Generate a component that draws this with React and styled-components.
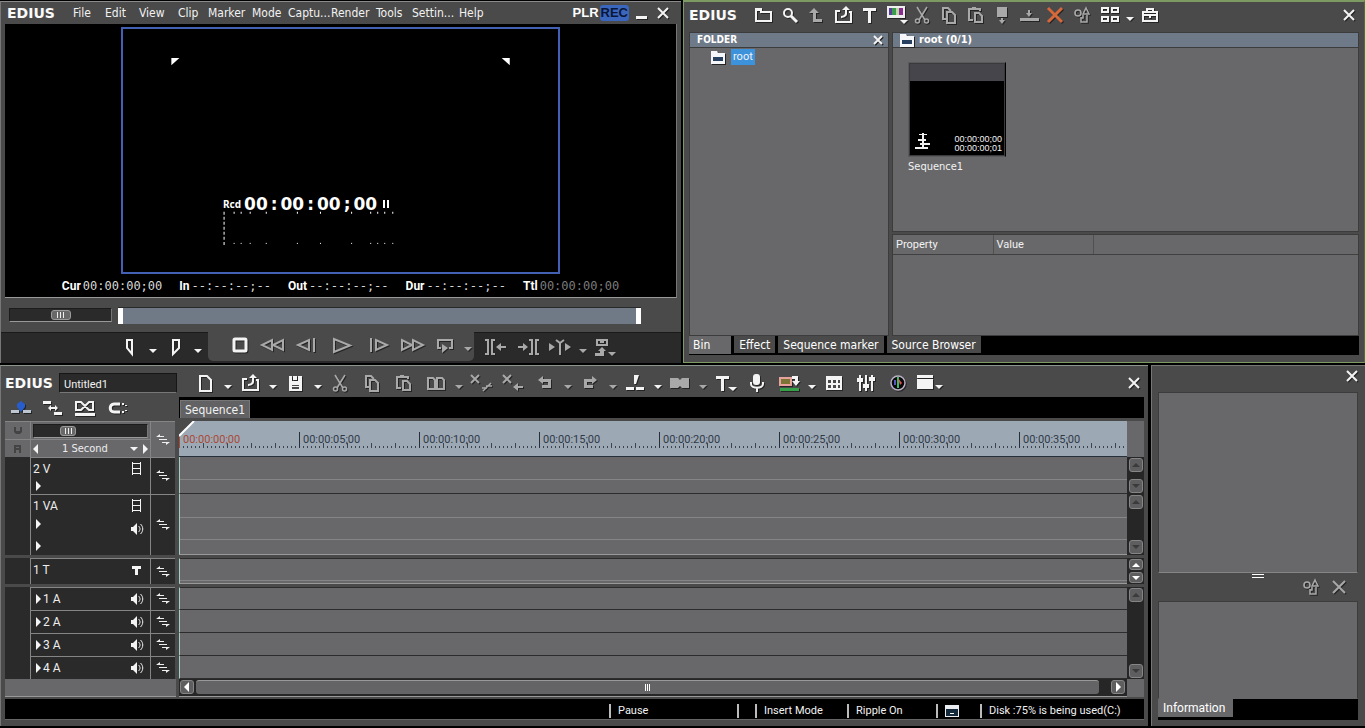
import React from "react";
import styled, { createGlobalStyle, css } from "styled-components";

const GlobalStyle = createGlobalStyle`
  * {
    box-sizing: border-box;
  }

  body {
    margin: 0;
    background-color: black;
    color: #f2f2f2;
    font-family: Roboto, "Liberation Sans", sans-serif;
    font-size: 12px;
    line-height: 16px;
  }

  button, input, select {
    margin: 0;
    padding: 0;
    border: 0;
    background: none;
    color: inherit;
    font: inherit;
  }
`;

const tahoma = `"DejaVu Sans Condensed", "DejaVu Sans", sans-serif`;

/* ---------- icons ---------- */

const outline = { fill: "none", stroke: "currentColor", strokeWidth: 2 };
const thin = { fill: "none", stroke: "currentColor", strokeWidth: 1 };

const icons = {
  folder: (
    <>
      <path {...outline} d="M5 18V7h5v2h10v9z" />
      <path d="M4 5h7v3H4z" />
    </>
  ),
  search: (
    <>
      <circle {...outline} cx="10" cy="10" r="4" />
      <path {...outline} strokeWidth="3" d="M13 13l6 6" />
    </>
  ),
  up: <path d="M10 5l5 5h-3v6h6v3H9v-9H5z" />,
  capture: (
    <>
      <path {...outline} d="M9 8H5v11h15V9h-2" />
      <path d="M15 3l4 4h-3v4c0 3-5 4-6 4v-2c2 0 4-1 4-3V7h-3z" />
    </>
  ),
  text: <path d="M6 5h13v3h-5v12h-3V8H6z" />,
  colors: (
    <>
      <path d="M3 3h18v12H3z" fill="#eee" />
      <path d="M5 5h3v7H5z" fill="#5a3f9a" />
      <path d="M8 5h4v7H8z" fill="#3c9a4c" />
      <path d="M12 5h3v7h-3z" fill="#b7d8a0" />
      <path d="M15 5h4v7h-4z" fill="#8b2b94" />
      <path d="M16 17h8l-4 4z" />
    </>
  ),
  cut: (
    <>
      <path {...outline} strokeWidth="1.6" d="M7 4l8 13M17 4L9 17" />
      <circle {...outline} strokeWidth="1.5" cx="7.500" cy="18" r="2" />
      <circle {...outline} strokeWidth="1.5" cx="16.500" cy="18" r="2" />
    </>
  ),
  copy: (
    <>
      <path {...outline} strokeWidth="2" d="M9 16H6V5h5l3 3" />
      <path {...outline} strokeWidth="2" d="M10 9h5l3 3v8h-8z" />
    </>
  ),
  paste: (
    <>
      <path {...outline} strokeWidth="2" d="M9 17H5V6h2M13 6h3v2M7 6h6" />
      <path d="M8 4h4v3H8z" />
      <path {...outline} strokeWidth="2" d="M11 10h4l3 3v6h-7z" />
    </>
  ),
  dropDown: <path d="M7 4h10v10H7zM11 15h2v2h2l-3 4-3-4h2z" />,
  insertBar: <path d="M3 15h19v3H3zM11 7h2v3h2l-3 4-3-4h2z" />,
  del: <path {...outline} stroke="#d6693c" strokeWidth="3" d="M5 5l14 14M19 5L5 19" />,
  shapes: (
    <>
      <circle {...outline} strokeWidth="1.600" cx="8" cy="10" r="3" />
      <path {...outline} strokeWidth="1.500" d="M16 5l-3 6h6zM11 15h2v-3M11 14v5h6v-7" />
    </>
  ),
  tiles: (
    <g {...outline} strokeWidth="2">
      <path d="M4 5h6v4H4zM14 5h6v4h-6zM4 14h6v4H4zM14 14h6v4h-6z" />
    </g>
  ),
  toolbox: (
    <>
      <path {...outline} strokeWidth="2" d="M5 9h14v9H5zM5 12h14M9 8V6h6v2" />
      <path d="M11 11h2v4h-2z" />
    </>
  ),
  close: <path {...outline} d="M7 7l10 10M17 7L7 17" />,
  smallClose: <path {...outline} d="M8 8l8 8M16 8l-8 8" />,
  bigClose: <path {...outline} d="M6 6l12 12M18 6L6 18" />,
  minimize: <path d="M7 15h11v3H7z" />,
  smallFolder: (
    <>
      <path d="M5 6h6l1 2h7v11H5z" fill="#f4f6fa" />
      <path d="M7 12h10v4H7z" fill="#27405f" />
    </>
  ),
  caret: <path d="M8 14h8l-4 4z" />,
  newFile: <path {...outline} d="M7 5h7l4 4v11H7z" />,
  save: (
    <>
      <path d="M6 5h3v5h6V5h4v15H6z" />
      <path d="M10 5h4v4h-4z" />
      <path d="M9 14h7v4H9z" fill="#4a4a4a" />
      <path d="M9 15h7v1H9z" />
    </>
  ),
  duplicate: (
    <path {...outline} strokeWidth="2" d="M4 7h5l2 2v9H4zM13 7h5l2 2v9h-7z" />
  ),
  xSlash: (
    <>
      <path {...outline} d="M2 4l8 8M10 4l-8 8" />
      <path {...outline} strokeWidth="1.500" d="M14 20l8-8M13 17h5M17 15h6" />
    </>
  ),
  xArrow: (
    <>
      <path {...outline} d="M2 4l8 8M10 4l-8 8" />
      <path d="M12 16l5-4v3h5v2h-5v3z" />
    </>
  ),
  undo: <path d="M5 9l5-4v3h8v9H9v-3h6v-3h-5v2z" />,
  redo: <path d="M19 9l-5-4v3H6v9h9v-3H9v-3h5v2z" />,
  split: <path d="M11 4h5l-3 9h-2zM3 16h8v3H3zM13 16h8v3h-8z" />,
  transition: <path d="M2 7h8l2 2 2-2h7v10h-7l-2-2-2 2H2z" />,
  title: <path d="M3 5h13v3h-5v12H8V8H3zM15 16h9l-4 4z" />,
  mic: (
    <>
      <rect x="8" y="3" width="7" height="11" rx="3" />
      <path {...outline} d="M6 11v2c0 5 12 5 12 0v-2M12 17v4" />
    </>
  ),
  export: (
    <>
      <path d="M3 7h11v7H3z" fill="#7b7435" stroke="#e7a39b" strokeWidth="2" />
      <path d="M3 17h19v3H3z" fill="#36a048" />
      <path d="M15 5h6v5h2l-4 5-4-5h3V8h-3z" />
    </>
  ),
  panelGrid: (
    <>
      <path d="M4 5h16v14H4z" />
      <g fill="#4a4a4a">
        <path d="M6 9h3v3H6zM11 9h3v3h-3zM16 9h2v3h-2zM6 14h3v3H6zM11 14h3v3h-3zM16 14h2v3h-2z" />
      </g>
    </>
  ),
  mixer: (
    <>
      <path d="M5 4h2v16H5zM11 4h2v16h-2zM17 4h2v16h-2z" />
      <path d="M3 7h6v4H3zM9 13h6v4H9zM15 6h6v4h-6z" />
    </>
  ),
  scope: (
    <>
      <circle cx="12" cy="12" r="7" fill="#08080c" stroke="#b9b0c4" strokeWidth="1.500" />
      <path d="M11 6h2v11h-2z" fill="#36c060" />
      <path d="M12 7l4 5-2 2z" fill="#e04d52" />
      <path d="M8 9h2v5H8z" fill="#5b55c0" />
    </>
  ),
  windows: <path d="M-1 4h16v3H-1zM-1 8h16v10H-1zM17 14h8l-4 4z" />,
  ripple: (
    <>
      <path d="M2 14h8v3H2zM14 14h8v3h-8z" fill="#bdc7d2" />
      <path d="M8 8l4-3 4 3v3l-4 5-4-5z" fill="#285ecb" />
    </>
  ),
  sync: (
    <>
      <path d="M2 5h8v3H2zM13 16h8v3h-8z" />
      <path d="M7 12l3-3v2h4V9l3 3-3 3v-2h-4v2z" />
    </>
  ),
  crossfade: (
    <>
      <path {...outline} strokeWidth="2" d="M3 6h5l8 8h4V6h-4l-8 8H3z" />
      <path d="M2 17h20v3H2z" />
    </>
  ),
  magnet: (
    <>
      <path {...outline} strokeWidth="3" d="M15 8H9c-5 0-5 8 0 8h6" />
      <path d="M17 7h2v2h-2zM17 15h2v2h-2zM20 9h2v1h-2zM20 14h2v1h-2z" />
    </>
  ),
  markIn: <path {...outline} d="M9 5h5v14l-5-6z" />,
  markOut: <path {...outline} d="M10 5h6v8l-6 6z" />,
  stop: <rect {...outline} strokeWidth="3" x="6" y="6" width="12" height="12" rx="1" />,
  rewind: <path {...outline} d="M11 7v10L1 12zM22 7v10l-10-5z" />,
  prevFrame: <path {...outline} d="M15 7v10L4 12zM20 5v14" />,
  play: <path {...outline} d="M4 6v13l16-6.500z" />,
  nextFrame: <path {...outline} d="M9 7v10l11-5zM4 5v14" />,
  forward: <path {...outline} d="M2 7v10l10-5zM13 7v10l10-5z" />,
  loop: (
    <>
      <path {...outline} d="M8 15H5V7h14v8h-3" />
      <path d="M9 11l6 4-6 5z" />
    </>
  ),
  toIn: (
    <>
      <path {...outline} d="M1 5h3v14H1M11 5H8v14h3" />
      <path d="M12 12l5-4v3h5v2h-5v3z" />
    </>
  ),
  toOut: (
    <>
      <path {...outline} d="M13 5h3v14h-3M23 5h-3v14h3" />
      <path d="M12 12L7 8v3H2v2h5v3z" />
    </>
  ),
  around: (
    <>
      <path d="M1 8l6 4-6 4zM17 8l6 4-6 4z" />
      <path {...outline} d="M8 5l4 3 4-3M12 8v12" />
    </>
  ),
  insertMenu: (
    <>
      <path {...outline} d="M4 5h10v5H4z" />
      <path d="M7 6h4v2H7z" />
      <path d="M2 18h5v-2H5l4-4 4 4h-2v5H2zM15 17h8l-4 4z" />
    </>
  ),
  film: <path {...thin} d="M8.500 5v13M16.500 5v13M8 6.500h9M8 11.500h9M8 16.500h9" />,
  speaker: (
    <>
      <path d="M7 10h2l4-4v12l-4-4H7z" />
      <path {...thin} d="M14.500 9c2 2 2 4 0 6M16.500 7c3 3 3 7 0 10" />
    </>
  ),
  trackText: <path d="M8 8h9v3h-3v6h-3v-6H8z" />,
  patch: (
    <>
      <path {...thin} d="M6 8.500h7M8 11.500h8M11 14.500h7" />
      <path d="M5 9l4-3v3zM19 14l-4 3v-3z" />
    </>
  ),
  video: <path d="M8 8h2v4h4V8h2v5l-2 2h-4l-2-2z" />,
  record: <path d="M8 8h7v8h-2v-3h-3v3H8zM10 10h3v1h-3z" fillRule="evenodd" />,
  left: <path d="M14 7v10l-5-5z" />,
  right: <path d="M10 7v10l5-5z" />,
  upSmall: <path d="M8 14h8l-4-4z" />,
  downSmall: <path d="M8 10h8l-4 4z" />,
  sequence: <path d="M11 4h2v15h-2zM8 5h8v1H8zM7 10h8v2H7zM9 14h10v2H9zM4 18h13v2H4z" />,
  app: (
    <>
      <path d="M5 6h14v12H5z" fill="#e9edf2" />
      <path d="M6 10h12v7H6z" fill="#14283c" />
      <path d="M10 14h4v1h-4z" fill="#fff" />
    </>
  ),
};

const Svg = styled.svg`
  display: block;
  flex: none;
  overflow: visible;
  fill: currentColor;
  filter: ${(p) => (p.$flat ? "none" : "drop-shadow(1px 1px 0 #242424)")};
`;

const Icon = ({ name, flat }) => (
  <Svg width="24" height="24" viewBox="0 0 24 24" $flat={flat} aria-hidden="true">
    {icons[name]}
  </Svg>
);

/* ---------- shared parts ---------- */

const Tool = styled.button`
  display: flex;
  flex: none;
  align-items: center;
  justify-content: center;
  width: ${(p) => p.$w || 32}px;
  height: 24px;
  color: ${(p) => (p.$dim ? "#a9a9a9" : "#f4f4f4")};
`;

const Brand = styled.span`
  flex: none;
  width: ${(p) => p.$w || 54}px;
  font: bold 14px/16px "DejaVu Sans", sans-serif;
  color: #fafafa;
`;

const Spacer = styled.div`
  flex: 1;
`;

const Page = styled.main`
  display: flex;
  flex-direction: column;
  gap: 2px;
  min-width: 1200px;
  height: 100vh;
  min-height: 640px;
  padding-bottom: 2px;
`;

const TopRow = styled.div`
  display: grid;
  flex: 1;
  grid-template-columns: 1fr 1fr;
  grid-template-rows: 100%;
  gap: 1px;
  min-height: 0;
`;

const BottomRow = styled.div`
  display: flex;
  gap: 3px;
`;

const frame = css`
  display: flex;
  flex-direction: column;
  background-color: #4a4a4a;
`;

/* ---------- recorder ---------- */

const Recorder = styled.section`
  ${frame}
  min-width: 0;
  margin: 1px 1px 0 0;
  border-top: 1px solid #8a8a8a;
  border-left: 1px solid #777;
`;

const MenuBar = styled.nav`
  display: flex;
  align-items: center;
  height: 22px;
  padding: 0 8px 0 6px;
  font: 12px/16px ${tahoma};
`;

const MenuItem = styled.button`
  flex: none;
  width: ${(p) => p.$w}px;
  text-align: left;
  white-space: nowrap;
`;

const ModeButton = styled.button`
  height: 16px;
  padding: 0 1px;
  border-radius: 3px;
  font: bold 13px/16px "Liberation Sans", sans-serif;
  color: ${(p) => (p.$on ? "#0a1638" : "#fff")};
  background-color: ${(p) => (p.$on ? "#3a66bd" : "transparent")};
`;

const Monitor = styled.div`
  display: flex;
  flex: 1;
  flex-direction: column;
  align-items: center;
  min-height: 0;
  margin: 0 4px;
  padding-top: 3px;
  background-color: black;
  border-bottom: 1px solid #999;
  border-right: 1px solid #777;
`;

const Preview = styled.div`
  position: relative;
  flex: 1;
  min-height: 0;
  aspect-ratio: 16 / 9;
  border: 2px solid #4361b4;
`;

const SafeArea = styled.svg`
  position: absolute;
  inset: 0;
  width: 100%;
  height: 100%;
  fill: white;
`;

const Osd = styled.div`
  position: absolute;
  left: 23%;
  bottom: 24%;
  display: flex;
  align-items: center;
  gap: 3px;
  font: bold 17px/20px "DejaVu Sans", sans-serif;
  color: white;
`;

const OsdLabel = styled.span`
  font: bold 10px/16px "Noto Sans", sans-serif;
`;

const OsdPause = styled.span`
  width: 6px;
  height: 8px;
  margin-left: 3px;
  border: solid white;
  border-width: 0 2px;
`;

const Codes = styled.div`
  display: flex;
  flex: none;
  align-items: center;
  gap: 17px;
  height: 23px;
`;

const Code = styled.div`
  display: flex;
  align-items: center;
  gap: 2px;
  font: 12px/16px "DejaVu Sans Mono", monospace;
  color: ${(p) => (p.$dim ? "#7c7c7c" : "#d8d8d8")};

  b {
    font: bold 12px/16px Roboto, sans-serif;
    color: white;
  }
`;

const Position = styled.div`
  display: flex;
  flex: none;
  gap: 6px;
  padding: 10px 40px 8px 8px;
`;

const Slider = styled.input`
  appearance: none;
  flex: none;
  width: ${(p) => p.$w}px;
  height: 14px;
  background-color: #2a2a2a;
  border: 1px solid #1c1c1c;
  border-right-color: #777;
  border-bottom-color: #999;

  &::-webkit-slider-thumb {
    appearance: none;
    width: ${(p) => p.$thumb}px;
    height: 10px;
    border: 1px solid #9a9a9a;
    border-radius: 3px;
    background: linear-gradient(
        90deg,
        #eee 0 1px,
        transparent 1px 3px,
        #eee 3px 4px,
        transparent 4px 6px,
        #eee 6px 7px
      )
      center / 7px 6px no-repeat #686868;
  }
`;

const SeekBar = styled.input`
  appearance: none;
  flex: 1;
  min-width: 0;
  height: 16px;
  background: linear-gradient(white, white) right / 5px 100% no-repeat #6f7a86;
  box-shadow: 0 -1px 0 #2a2a2a;

  &::-webkit-slider-thumb {
    appearance: none;
    width: 5px;
    height: 16px;
    background-color: white;
  }
`;

const Transport = styled.div`
  display: flex;
  flex: none;
  height: 31px;
  padding-bottom: 2px;
  background-color: #2a2a2a;
`;

const TransportSide = styled.div`
  display: flex;
  flex: 1;
  align-items: center;
  justify-content: ${(p) => (p.$end ? "flex-end" : "flex-start")};
  padding: 0 4px 0 6px;
  border-top: 1px solid #1a1a1a;
`;

const TransportMain = styled.div`
  display: flex;
  align-items: center;
  padding: 0 0 3px 15px;
  background-color: #4a4a4a;
  border-radius: 0 0 5px 5px;
`;

const menus = [
  ["File", 32],
  ["Edit", 34],
  ["View", 39],
  ["Clip", 30],
  ["Marker", 44],
  ["Mode", 36],
  ["Captu...", 43],
  ["Render", 45],
  ["Tools", 36],
  ["Settin...", 47],
  ["Help", 30],
];

const codes = [
  ["Cur", "00:00:00;00"],
  ["In", "--:--:--;--"],
  ["Out", "--:--:--;--"],
  ["Dur", "--:--:--;--"],
  ["Ttl", "00:00:00;00"],
];

const ticks = [9, 16, 25, 41, 72, 95, 126, 145, 152, 159, 167];

const RecorderWindow = () => (
  <Recorder>
    <MenuBar>
      <Brand $w={66}>EDIUS</Brand>
      {menus.map(([label, w]) => (
        <MenuItem key={label} $w={w}>{label}</MenuItem>
      ))}
      <Spacer />
      <ModeButton>PLR</ModeButton>
      <ModeButton $on>REC</ModeButton>
      <Tool $w={24} aria-label="Minimize"><Icon name="minimize" /></Tool>
      <Tool $w={20} aria-label="Close"><Icon name="close" /></Tool>
    </MenuBar>
    <Monitor>
      <Preview>
        <SafeArea viewBox="0 0 431 242">
          <path d="M47 29h8l-8 7zM384 29h-8l8 7z" />
          <path d="M99.500 182v33" stroke="white" strokeDasharray="3 2" />
          {ticks.map((x) => (
            <g key={x}>
              <rect x={100 + x} y="182" width="1" height="2" />
              <rect x={100 + x} y="213" width="1" height="1" />
            </g>
          ))}
        </SafeArea>
        <Osd>
          <OsdLabel>Rcd</OsdLabel>
          <span>00</span>
          <span>:</span>
          <span>00</span>
          <span>:</span>
          <span>00</span>
          <span>;</span>
          <span>00</span>
          <OsdPause />
        </Osd>
      </Preview>
      <Codes>
        {codes.map(([label, value]) => (
          <Code key={label} $dim={label === "Ttl"}>
            <b>{label}</b>
            {value}
          </Code>
        ))}
      </Codes>
    </Monitor>
    <Position>
      <Slider type="range" $w={103} $thumb={20} defaultValue="50" aria-label="Shuttle" />
      <SeekBar type="range" defaultValue="0" aria-label="Position" />
    </Position>
    <Transport>
      <TransportSide $end>
        <Tool aria-label="Set in"><Icon name="markIn" /></Tool>
        <Tool $w={13} aria-label="In options"><Icon name="caret" /></Tool>
        <Tool aria-label="Set out"><Icon name="markOut" /></Tool>
        <Tool $w={13} aria-label="Out options"><Icon name="caret" /></Tool>
      </TransportSide>
      <TransportMain>
        <Tool $w={33} aria-label="Stop"><Icon name="stop" /></Tool>
        <Tool $w={33} $dim aria-label="Rewind"><Icon name="rewind" /></Tool>
        <Tool $w={33} $dim aria-label="Previous frame"><Icon name="prevFrame" /></Tool>
        <Tool $w={40} $dim aria-label="Play"><Icon name="play" /></Tool>
        <Tool $w={33} $dim aria-label="Next frame"><Icon name="nextFrame" /></Tool>
        <Tool $w={33} $dim aria-label="Fast forward"><Icon name="forward" /></Tool>
        <Tool $w={33} $dim aria-label="Loop"><Icon name="loop" /></Tool>
        <Tool $w={13} $dim aria-label="Loop options"><Icon name="caret" /></Tool>
      </TransportMain>
      <TransportSide>
        <Tool $dim aria-label="Go to in"><Icon name="toIn" /></Tool>
        <Tool $dim aria-label="Go to out"><Icon name="toOut" /></Tool>
        <Tool $dim aria-label="Play around"><Icon name="around" /></Tool>
        <Tool $w={13} $dim aria-label="Play options"><Icon name="caret" /></Tool>
        <Tool $dim aria-label="Insert"><Icon name="insertMenu" /></Tool>
      </TransportSide>
    </Transport>
  </Recorder>
);

/* ---------- bin ---------- */

const Bin = styled.section`
  ${frame}
  min-width: 0;
  padding: 0 5px 7px;
  border: 1px solid #7c9a62;
  border-top-width: 2px;
  border-right-color: #3f7a2c;
`;

const BinTools = styled.header`
  display: flex;
  flex: none;
  align-items: center;
  height: 30px;
  padding-bottom: 5px;
`;

const BinIcons = styled.div`
  display: flex;
  justify-content: space-between;
  width: 343px;
`;

const BinBody = styled.div`
  display: grid;
  flex: 1;
  grid-template-columns: 200px 1fr;
  grid-template-rows: 100%;
  gap: 3px;
  min-height: 0;
`;

const Pane = styled.div`
  flex: ${(p) => p.$flex || "none"};
  min-height: 0;
  background-color: #68686a;
  border: 1px solid #3c3c3c;
`;

const PaneHeader = styled.header`
  display: flex;
  align-items: center;
  height: 15px;
  padding-left: ${(p) => (p.$icon ? 2 : 7)}px;
  background-color: #6f7a88;
  border-bottom: 1px solid #3c3c3c;
  font: bold ${(p) => (p.$icon ? 11 : 10)}px/14px ${tahoma};
  color: white;
`;

const TreeItem = styled.div`
  display: flex;
  align-items: center;
  gap: 1px;
  height: 18px;
  padding-left: 16px;
  font-size: 11px;
`;

const TreeLabel = styled.button`
  height: 16px;
  padding: 0 2px;
  background-color: #3d92dc;
`;

const PaneStack = styled.div`
  display: flex;
  flex-direction: column;
  gap: 2px;
  min-height: 0;
`;

const Clip = styled.figure`
  width: 98px;
  margin: 14px 15px;
  font: 11px/16px ${tahoma};
`;

const Thumb = styled.div`
  display: flex;
  align-items: flex-end;
  justify-content: space-between;
  height: 95px;
  margin-bottom: 2px;
  padding: 0 3px 3px 2px;
  background: linear-gradient(#46454b 18px, black 18px);
  border: 1px solid #5a5a5c;
  border-right-color: black;
  outline: 1px solid #3a3a3c;
  outline-offset: -2px;
`;

const ThumbCodes = styled.div`
  font: 9px/9px "Liberation Sans", sans-serif;
  text-align: right;
`;

const Props = styled.table`
  width: 100%;
  border-collapse: collapse;
  table-layout: fixed;
  font-size: 11px;

  th {
    height: 19px;
    padding: 1px 3px 0;
    border-right: 1px solid #505050;
    border-bottom: 1px solid #404040;
    font-weight: normal;
    text-align: left;
  }

  th:last-child {
    border-right: 0;
  }
`;

const Tabs = styled.div`
  display: flex;
  flex: none;
  gap: 3px;
  height: ${(p) => p.$h || 19}px;
  background-color: black;
  font: 12px/16px ${tahoma};
`;

const Tab = styled.button`
  height: ${(p) => (p.$on ? 18 : 17)}px;
  padding: 0 5px;
  background-color: #4a4a4a;
  color: white;
`;

const ActiveTab = styled(Tab)`
  height: 18px;
  padding: 0 21px 0 4px;
  background-color: #68686a;
`;

const binTools = [
  ["folder"],
  ["search"],
  ["up", true],
  ["capture"],
  ["text"],
  ["colors"],
  ["cut", true],
  ["copy", true],
  ["paste", true],
  ["dropDown", true],
  ["insertBar", true],
  ["del"],
  ["shapes", true],
];

const BinWindow = () => (
  <Bin>
    <BinTools>
      <Brand $w={62}>EDIUS</Brand>
      <BinIcons>
        {binTools.map(([name, dim]) => (
          <Tool key={name} $w={24} $dim={dim} aria-label={name}><Icon name={name} /></Tool>
        ))}
      </BinIcons>
      <Tool aria-label="View"><Icon name="tiles" /></Tool>
      <Tool $w={8} aria-label="View options"><Icon name="caret" /></Tool>
      <Tool aria-label="Tools"><Icon name="toolbox" /></Tool>
      <Spacer />
      <Tool $w={20} aria-label="Close"><Icon name="close" /></Tool>
    </BinTools>
    <BinBody>
      <Pane>
        <PaneHeader>
          FOLDER
          <Spacer />
          <Tool $w={20} aria-label="Close folders"><Icon name="smallClose" /></Tool>
        </PaneHeader>
        <TreeItem>
          <Icon name="smallFolder" />
          <TreeLabel>root</TreeLabel>
        </TreeItem>
      </Pane>
      <PaneStack>
        <Pane $flex="1">
          <PaneHeader $icon>
            <Icon name="smallFolder" />
            root (0/1)
          </PaneHeader>
          <Clip>
            <Thumb>
              <Icon name="sequence" flat />
              <ThumbCodes>
                <div>00:00:00;00</div>
                <div>00:00:00;01</div>
              </ThumbCodes>
            </Thumb>
            <figcaption>Sequence1</figcaption>
          </Clip>
        </Pane>
        <Pane $flex="0 0 102px">
          <Props>
            <colgroup>
              <col width="100" />
              <col width="100" />
              <col />
            </colgroup>
            <thead>
              <tr>
                <th>Property</th>
                <th>Value</th>
                <th aria-label="Details" />
              </tr>
            </thead>
          </Props>
        </Pane>
      </PaneStack>
    </BinBody>
    <Tabs>
      <ActiveTab>Bin</ActiveTab>
      <Tab>Effect</Tab>
      <Tab>Sequence marker</Tab>
      <Tab>Source Browser</Tab>
    </Tabs>
  </Bin>
);

/* ---------- timeline ---------- */

const Timeline = styled.section`
  ${frame}
  flex: 1;
  min-width: 0;
  padding: 0 4px 6px;
  border-top: 1px solid #8c968c;
  border-left: 1px solid #777;
`;

const TimelineTop = styled.div`
  display: flex;
`;

const ProjectSide = styled.div`
  flex: none;
  width: 174px;
`;

const ProjectName = styled.div`
  display: flex;
  align-items: center;
  height: 31px;
  padding: 2px 2px 0 0;
`;

const NameInput = styled.input`
  flex: 1;
  min-width: 0;
  height: 20px;
  padding: 3px 4px 0;
  background-color: #2a2a2a;
  border: 1px solid #161616;
  border-bottom-color: #777;
  font-size: 11px;
`;

const ModeTools = styled.div`
  display: flex;
  align-items: center;
  height: 21px;
`;

const ToolSide = styled.div`
  flex: 1;
  min-width: 0;
`;

const ToolRow = styled.div`
  display: flex;
  align-items: center;
  height: 31px;
  padding: 3px 0 0 10px;
`;

const SequenceTabs = styled.div`
  height: 21px;
  padding: 3px 0 0 1px;
  background-color: black;
`;

const SequenceTab = styled.button`
  height: 18px;
  padding: 0 4px;
  background-color: #626264;
  border: 1px solid #777;
  border-bottom: 0;
  font: 12px/16px ${tahoma};
`;

const Row = styled.div`
  display: flex;
  height: ${(p) => p.$h}px;
  margin-top: ${(p) => (p.$gap ? 3 : 0)}px;
`;

const Head = styled.div`
  display: grid;
  grid-template-columns: 25px 120px 1fr;
  flex: none;
  width: 170px;
  margin-right: 4px;
  background-color: ${(p) => (p.$light ? "#68686a" : "#2a2a2a")};

  > * + * {
    border-left: 1px solid #858585;
    border-top: 1px solid #858585;
  }
`;

const HeadCell = styled.div`
  display: flex;
  flex-direction: column;
  align-items: ${(p) => (p.$center ? "center" : "stretch")};
  justify-content: ${(p) => (p.$center ? "center" : "flex-start")};
  overflow: hidden;
  color: #eee;
`;

const HeadLine = styled.div`
  display: flex;
  flex: none;
  align-items: ${(p) => (p.$top ? "flex-start" : "center")};
  height: ${(p) => p.$h || 22}px;
  padding: 0 2px;
  overflow: hidden;
`;

const TrackArrow = styled(Tool)`
  width: 10px;
  height: 14px;
  overflow: hidden;
`;

const Lane = styled.div`
  flex: 1;
  min-width: 0;
  overflow: hidden;
  background-color: #68686a;
  border-left: 1px solid #9fd0c2;
  border-bottom: 1px solid ${(p) => (p.$edge ? "#999" : "#2c2c2c")};
  border-top: ${(p) => (p.$group ? "1px solid #2c2c2c" : "0")};
`;

const Strip = styled.div`
  height: ${(p) => p.$h || 22}px;
  border-bottom: 1px solid #858585;
`;

const ScrollCell = styled.div`
  display: flex;
  flex: none;
  flex-direction: column;
  align-items: center;
  justify-content: space-between;
  width: 17px;
  padding: 1px 0;
  background-color: #262626;
`;

const ScrollButton = styled.button`
  display: flex;
  flex: none;
  align-items: center;
  justify-content: center;
  width: 14px;
  height: ${(p) => p.$h || 14}px;
  overflow: hidden;
  border: 1px solid #858585;
  border-radius: 3px;
  background-color: #5e5e60;
  color: ${(p) => (p.$on ? "#fff" : "#3a3a3a")};
`;

const ZoomRow = styled.div`
  display: flex;
  align-items: center;
  height: 17px;
  padding: 0 2px;
`;

const ScaleRow = styled.div`
  display: flex;
  align-items: center;
  height: 18px;
  border-top: 1px solid #858585;
`;

const ScaleSelect = styled.select`
  appearance: none;
  flex: 1;
  min-width: 0;
  height: 17px;
  padding-left: 21px;
  font: 11px/16px ${tahoma};
`;

const LampCell = styled.div`
  display: flex;
  align-items: center;
  justify-content: center;
  height: 18px;
  overflow: hidden;
  border-top: 1px solid #858585;
  color: #444;
`;

const Ruler = styled.div`
  position: relative;
  display: flex;
  flex: 1;
  min-width: 0;
  overflow: hidden;
  padding-top: 11px;
  border-bottom: 1px solid #26303a;
  background: repeating-linear-gradient(90deg, #3a4450 0 1px, transparent 1px 24px) 0 22px / 100%
      5px no-repeat,
    repeating-linear-gradient(90deg, #3a4450 0 1px, transparent 1px 4px) 0 25px / 100% 2px
      no-repeat,
    #9da8b5;
`;

const RulerMark = styled.span`
  flex: none;
  width: 120px;
  height: 16px;
  padding-left: 3px;
  font-size: 11px;
  color: ${(p) => (p.$first ? "#a94a35" : "#2f3a46")};
  border-left: 1px solid ${(p) => (p.$first ? "#a94a35" : "#26303a")};
`;

const Playhead = styled.svg`
  position: absolute;
  top: 0;
  left: 0;
`;

const Filler = styled.div`
  flex: none;
  width: 17px;
  background-color: #68686a;
`;

const FootBlock = styled.div`
  flex: none;
  width: 171px;
  margin-right: 3px;
  background-color: #68686a;
  border-bottom: 1px solid #999;
`;

const HScroll = styled.div`
  display: flex;
  flex: 1;
  align-items: center;
  gap: 2px;
  padding: 0 2px 1px 1px;
  background-color: #262626;
  border-bottom: 1px solid #999;
`;

const HThumb = styled.div`
  display: flex;
  flex: 1;
  align-items: center;
  justify-content: center;
  gap: 1px;
  height: 14px;
  margin-right: 10px;
  border-top: 1px solid #999;
  border-radius: 3px;
  background-color: #646466;

  i {
    width: 1px;
    height: 7px;
    background-color: white;
  }
`;

const Status = styled.footer`
  display: flex;
  justify-content: flex-end;
  align-items: center;
  height: 21px;
  margin-top: 2px;
  padding-top: 4px;
  background-color: black;
  border-bottom: 1px solid #666;
  font-size: 11px;
`;

const StatusItem = styled.div`
  display: flex;
  align-items: center;
  width: ${(p) => p.$w}px;
  height: 14px;
  padding-left: 7px;
  border-left: 2px solid #bbb;
  white-space: nowrap;
`;

const StatusIcon = styled(StatusItem)`
  padding-left: 2px;
`;

const editTools = [
  ["newFile"],
  ["caret"],
  ["capture"],
  ["caret"],
  ["save"],
  ["caret"],
  ["cut", true],
  ["copy", true],
  ["paste", true],
  ["duplicate", true],
  ["caret", true],
  ["xSlash", true],
  ["xArrow", true],
  ["undo", true],
  ["caret", true],
  ["redo", true],
  ["caret", true],
  ["split"],
  ["caret"],
  ["transition", true],
  ["caret", true],
  ["title"],
  ["mic"],
  ["export"],
  ["caret"],
  ["panelGrid"],
  ["mixer"],
  ["scope"],
  ["windows"],
];

const marks = ["00", "05", "10", "15", "20", "25", "30", "35"];

const ScrollPair = ({ h, on }) => (
  <ScrollCell>
    <ScrollButton $h={h} $on={on} aria-label="Scroll up"><Icon name="upSmall" flat /></ScrollButton>
    <ScrollButton $h={h} $on={on} aria-label="Scroll down"><Icon name="downSmall" flat /></ScrollButton>
  </ScrollCell>
);

const Arrow = () => (
  <TrackArrow aria-label="Expand"><Icon name="right" flat /></TrackArrow>
);

const TrackSwitch = ({ name }) => (
  <Tool $w={24} aria-label={name}><Icon name={name} flat /></Tool>
);

const PatchCell = () => (
  <HeadCell $center>
    <Icon name="patch" flat />
  </HeadCell>
);

const TimelineWindow = () => (
  <Timeline>
    <TimelineTop>
      <ProjectSide>
        <ProjectName>
          <Brand $w={54}>EDIUS</Brand>
          <NameInput defaultValue="Untitled1" aria-label="Project name" />
        </ProjectName>
        <ModeTools>
          {["ripple", "sync", "crossfade", "magnet"].map((name) => (
            <Tool key={name} aria-label={name}><Icon name={name} /></Tool>
          ))}
        </ModeTools>
      </ProjectSide>
      <ToolSide>
        <ToolRow>
          {editTools.map(([name, dim], i) => (
            <Tool key={i} $w={name === "caret" ? 13 : 32} $dim={dim} aria-label={name}>
              <Icon name={name} />
            </Tool>
          ))}
          <Spacer />
          <Tool $w={20} aria-label="Close"><Icon name="close" /></Tool>
        </ToolRow>
        <SequenceTabs>
          <SequenceTab>Sequence1</SequenceTab>
        </SequenceTabs>
      </ToolSide>
    </TimelineTop>

    <Row $h={36} $gap>
      <Head $light>
        <div>
          <LampCell><Icon name="video" flat /></LampCell>
          <LampCell><Icon name="record" flat /></LampCell>
        </div>
        <HeadCell>
          <ZoomRow>
            <Slider type="range" $w={115} $thumb={16} defaultValue="27" aria-label="Zoom" />
          </ZoomRow>
          <ScaleRow>
            <Tool $w={10} aria-label="Zoom out"><Icon name="left" flat /></Tool>
            <ScaleSelect aria-label="Time scale" defaultValue="1 Second">
              <option>1 Second</option>
              <option>5 Seconds</option>
            </ScaleSelect>
            <Tool as="span" $w={13}><Icon name="downSmall" flat /></Tool>
            <Tool $w={10} aria-label="Zoom in"><Icon name="right" flat /></Tool>
          </ScaleRow>
        </HeadCell>
        <PatchCell />
      </Head>
      <Ruler>
        {marks.map((m, i) => (
          <RulerMark key={m} $first={i === 0}>00:00:{m};00</RulerMark>
        ))}
        <Playhead width="16" height="16" viewBox="0 0 16 16">
          <path d="M0 0h15L0 15z" fill="#4a4a4a" />
          <path d="M0 15L15 0" stroke="white" strokeWidth="2" />
        </Playhead>
      </Ruler>
      <Filler />
    </Row>

    <Row $h={37}>
      <Head>
        <div />
        <HeadCell>
          <HeadLine>2 V<Spacer /><TrackSwitch name="film" /></HeadLine>
          <HeadLine $h={12}><Arrow /></HeadLine>
        </HeadCell>
        <PatchCell />
      </Head>
      <Lane>
        <Strip $h={23} />
      </Lane>
      <ScrollPair />
    </Row>

    <Row $h={61}>
      <Head>
        <div />
        <HeadCell>
          <HeadLine>1 VA<Spacer /><TrackSwitch name="film" /></HeadLine>
          <HeadLine $top><Arrow /><Spacer /><TrackSwitch name="speaker" /></HeadLine>
          <HeadLine $h={14}><Arrow /></HeadLine>
        </HeadCell>
        <PatchCell />
      </Head>
      <Lane $edge>
        <Strip $h={24} />
        <Strip />
      </Lane>
      <ScrollPair />
    </Row>

    <Row $h={26} $gap>
      <Head>
        <div />
        <HeadCell>
          <HeadLine>1 T<Spacer /><TrackSwitch name="trackText" /></HeadLine>
        </HeadCell>
        <PatchCell />
      </Head>
      <Lane $edge $group>
        <Strip />
      </Lane>
      <ScrollPair h={11} on />
    </Row>

    <Row $h={92} $gap>
      <div>
        {[1, 2, 3, 4].map((n) => (
          <Row key={n} $h={23}>
            <Head>
              <div />
              <HeadCell>
                <HeadLine><Arrow />{n} A<Spacer /><TrackSwitch name="speaker" /></HeadLine>
              </HeadCell>
              <PatchCell />
            </Head>
          </Row>
        ))}
      </div>
      <ToolSide>
        {[1, 2, 3, 4].map((n) => (
          <Row key={n} $h={23}>
            <Lane $group={n === 1} />
          </Row>
        ))}
      </ToolSide>
      <ScrollPair />
    </Row>

    <Row $h={18}>
      <FootBlock />
      <HScroll>
        <ScrollButton $on aria-label="Scroll left"><Icon name="left" flat /></ScrollButton>
        <HThumb><i /><i /><i /></HThumb>
        <ScrollButton $on aria-label="Scroll right"><Icon name="right" flat /></ScrollButton>
      </HScroll>
      <Filler />
    </Row>

    <Status>
      <StatusItem $w={128}>Pause</StatusItem>
      <StatusItem $w={18} />
      <StatusItem $w={92}>Insert Mode</StatusItem>
      <StatusItem $w={89}>Ripple On</StatusItem>
      <StatusIcon $w={44}><Icon name="app" flat /></StatusIcon>
      <StatusItem $w={164}>Disk :75% is being used(C:)</StatusItem>
    </Status>
  </Timeline>
);

/* ---------- information ---------- */

const Info = styled.section`
  ${frame}
  flex: none;
  width: 214px;
  padding: 0 7px 6px 6px;
  border-top: 1px solid #777;
  border-left: 1px solid #777;
`;

const InfoHeader = styled.header`
  display: flex;
  align-items: flex-start;
  justify-content: flex-end;
  height: 26px;
  margin-right: -4px;

  button {
    height: 20px;
  }
`;

const InfoPane = styled.div`
  flex: ${(p) => p.$flex};
  background-color: #68686a;
  border: 1px solid #3c3c3c;
  border-bottom-color: ${(p) => (p.$open ? "#68686a" : "#858585")};
`;

const InfoTools = styled.div`
  display: grid;
  grid-template-columns: 1fr 12px 1fr;
  height: 28px;
`;

const Grip = styled.div`
  height: 4px;
  margin-top: 1px;
  border: solid white;
  border-width: 1px 0;
`;

const InfoButtons = styled.div`
  display: flex;
  justify-content: flex-end;
  align-items: center;
  padding-right: 5px;
`;

const InfoTab = styled(ActiveTab)`
  padding: 0 8px 0 5px;
  font: 12px/16px Roboto, sans-serif;
`;

const InfoWindow = () => (
  <Info>
    <InfoHeader>
      <Tool $w={20} aria-label="Close"><Icon name="close" /></Tool>
    </InfoHeader>
    <InfoPane $flex="182" />
    <InfoTools>
      <span />
      <Grip />
      <InfoButtons>
        <Tool $w={28} $dim aria-label="Properties"><Icon name="shapes" /></Tool>
        <Tool $w={28} $dim aria-label="Delete"><Icon name="bigClose" /></Tool>
      </InfoButtons>
    </InfoTools>
    <InfoPane $flex="97" $open />
    <Tabs $h={21}>
      <InfoTab>Information</InfoTab>
    </Tabs>
  </Info>
);

const App = () => {
  return (
    <>
      <GlobalStyle />
      <Page>
        <TopRow>
          <RecorderWindow />
          <BinWindow />
        </TopRow>
        <BottomRow>
          <TimelineWindow />
          <InfoWindow />
        </BottomRow>
      </Page>
    </>
  );
};

export default App;
